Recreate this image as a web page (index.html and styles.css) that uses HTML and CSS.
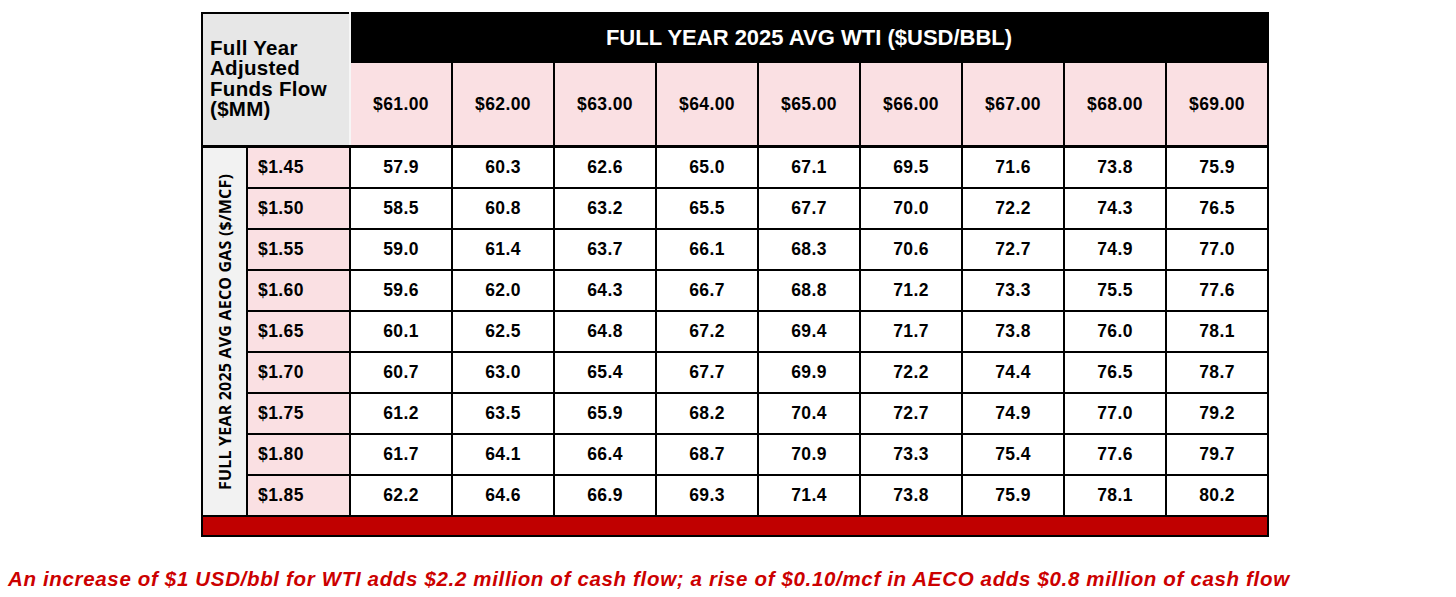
FILE: index.html
```html
<!DOCTYPE html>
<html>
<head>
<meta charset="utf-8">
<link rel="stylesheet" href="styles.css">
</head>
<body>
<div class="page">
<table class="sens">
  <colgroup>
    <col class="c-axis"><col class="c-lbl">
    <col class="c-v"><col class="c-v"><col class="c-v"><col class="c-v"><col class="c-v"><col class="c-v"><col class="c-v"><col class="c-v"><col class="c-v">
  </colgroup>
  <tr class="r-title">
    <td class="corner" colspan="2" rowspan="2"><div class="corner-text">Full Year<br>Adjusted<br>Funds Flow<br>($MM)</div></td>
    <td class="title" colspan="9">FULL YEAR 2025 AVG WTI ($USD/BBL)</td>
  </tr>
  <tr class="r-price">
    <td class="price">$61.00</td><td class="price">$62.00</td><td class="price">$63.00</td><td class="price">$64.00</td><td class="price">$65.00</td><td class="price">$66.00</td><td class="price">$67.00</td><td class="price">$68.00</td><td class="price">$69.00</td>
  </tr>
  <tr class="r-data first">
    <td class="axis" rowspan="9"><div class="axis-text">FULL YEAR 2025 AVG AECO GAS ($/MCF)</div></td>
    <td class="lbl">$1.45</td><td>57.9</td><td>60.3</td><td>62.6</td><td>65.0</td><td>67.1</td><td>69.5</td><td>71.6</td><td>73.8</td><td>75.9</td>
  </tr>
  <tr class="r-data"><td class="lbl">$1.50</td><td>58.5</td><td>60.8</td><td>63.2</td><td>65.5</td><td>67.7</td><td>70.0</td><td>72.2</td><td>74.3</td><td>76.5</td></tr>
  <tr class="r-data"><td class="lbl">$1.55</td><td>59.0</td><td>61.4</td><td>63.7</td><td>66.1</td><td>68.3</td><td>70.6</td><td>72.7</td><td>74.9</td><td>77.0</td></tr>
  <tr class="r-data"><td class="lbl">$1.60</td><td>59.6</td><td>62.0</td><td>64.3</td><td>66.7</td><td>68.8</td><td>71.2</td><td>73.3</td><td>75.5</td><td>77.6</td></tr>
  <tr class="r-data"><td class="lbl">$1.65</td><td>60.1</td><td>62.5</td><td>64.8</td><td>67.2</td><td>69.4</td><td>71.7</td><td>73.8</td><td>76.0</td><td>78.1</td></tr>
  <tr class="r-data"><td class="lbl">$1.70</td><td>60.7</td><td>63.0</td><td>65.4</td><td>67.7</td><td>69.9</td><td>72.2</td><td>74.4</td><td>76.5</td><td>78.7</td></tr>
  <tr class="r-data"><td class="lbl">$1.75</td><td>61.2</td><td>63.5</td><td>65.9</td><td>68.2</td><td>70.4</td><td>72.7</td><td>74.9</td><td>77.0</td><td>79.2</td></tr>
  <tr class="r-data"><td class="lbl">$1.80</td><td>61.7</td><td>64.1</td><td>66.4</td><td>68.7</td><td>70.9</td><td>73.3</td><td>75.4</td><td>77.6</td><td>79.7</td></tr>
  <tr class="r-data"><td class="lbl">$1.85</td><td>62.2</td><td>64.6</td><td>66.9</td><td>69.3</td><td>71.4</td><td>73.8</td><td>75.9</td><td>78.1</td><td>80.2</td></tr>
  <tr class="r-bar"><td class="bar" colspan="11"></td></tr>
</table>
<p class="caption">An increase of $1 USD/bbl for WTI adds $2.2 million of cash flow; a rise of $0.10/mcf in AECO adds $0.8 million of cash flow</p>
</div>
</body>
</html>
```

FILE: styles.css
```css
html, body {
  margin: 0;
  padding: 0;
  background: #ffffff;
}

.page {
  padding: 12px 0 0 0;
  font-family: "Liberation Sans", Arial, sans-serif;
}

.sens {
  margin-left: 201px;
  width: 1066px;
  table-layout: fixed;
  border-collapse: collapse;
  border: 2px solid #1a1a1a;
}

.c-axis { width: 45px; }
.c-lbl { width: 103px; }
.c-v { width: 102px; }

.sens td {
  border: 2px solid #000;
  padding: 0;
  font-weight: bold;
  font-size: 17.5px;
  letter-spacing: 0.4px;
  text-align: center;
  color: #000;
  background: #fff;
}

.r-title td { height: 46px; }
.r-price td { height: 82px; }
.r-data td { height: 39px; }
.r-bar td { height: 18px; }

.sens td.corner {
  background: #e7e7e7;
  text-align: left;
  vertical-align: middle;
  border-right: 2px solid #f6f6f6;
  border-bottom: 3px solid #000;
}

.corner-text {
  padding-left: 7px;
  padding-bottom: 2px;
  font-size: 20.5px;
  line-height: 20.5px;
  letter-spacing: 0.3px;
}

.sens td.title {
  background: #000;
  color: #fff;
  font-size: 22px;
  letter-spacing: 0;
  padding-top: 1px;
}

.sens td.price {
  background: #fae0e3;
  border-bottom: 3px solid #000;
  border-top: 2px solid #000;
}

.sens td.axis {
  background: #f2f2f2;
  position: relative;
}

.axis-text {
  position: absolute;
  left: 50%;
  top: 50%;
  transform: translate(-50%, -50%) rotate(-90deg);
  white-space: nowrap;
  font-family: "Open Sans", "Liberation Sans", sans-serif;
  font-weight: bold;
  font-size: 16px;
  letter-spacing: 0.2px;
}

.sens td.lbl {
  background: #fae0e3;
  text-align: left;
  padding-left: 10px;
}

.sens td.bar {
  background: #c00000;
}

.caption {
  margin: 30px 0 0 8px;
  font-size: 20.5px;
  letter-spacing: 0.66px;
  font-weight: bold;
  font-style: italic;
  color: #cc0000;
  white-space: nowrap;
}
```
